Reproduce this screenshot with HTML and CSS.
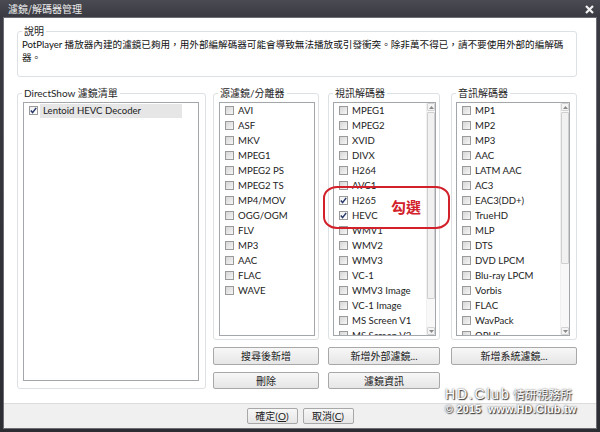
FILE: index.html
```html
<!DOCTYPE html>
<html lang="zh-Hant">
<head>
<meta charset="utf-8">
<title>濾鏡/解碼器管理</title>
<link rel="stylesheet" href="styles.css">
</head>
<body>
<div class="window">
  <div class="titlebar">
    <span class="title">濾鏡/解碼器管理</span>
    <svg class="close" width="9" height="9" viewBox="0 0 9 9"><path d="M1 1 L8 8 M8 1 L1 8" stroke="#f2f2f2" stroke-width="2.2" fill="none"/></svg>
  </div>
  <div class="client">
    <div class="main">
      <div class="group desc">
        <span class="legend">說明</span>
        <p class="desc-text">PotPlayer 播放器內建的濾鏡已夠用，用外部編解碼器可能會導致無法播放或引發衝突。除非萬不得已，請不要使用外部的編解碼<br>器。</p>
      </div>
      <div class="row">
        <div class="group ds">
          <span class="legend">DirectShow 濾鏡清單</span>
          <div class="listbox">
            <div class="items">
              <div class="item sel"><span class="cb on"><svg width="7" height="7" viewBox="0 0 7 7"><path d="M0.8 3.6 L2.6 5.6 L6.2 0.9" stroke="#25386a" stroke-width="1.5" fill="none"/></svg></span><span class="label">Lentoid HEVC Decoder</span></div>
            </div>
          </div>
        </div>

        <div class="col col-src">
          <div class="group cgroup">
            <span class="legend">源濾鏡/分離器</span>
            <div class="listbox">
              <div class="items">
                <div class="item"><span class="cb"></span><span class="label">AVI</span></div>
                <div class="item"><span class="cb"></span><span class="label">ASF</span></div>
                <div class="item"><span class="cb"></span><span class="label">MKV</span></div>
                <div class="item"><span class="cb"></span><span class="label">MPEG1</span></div>
                <div class="item"><span class="cb"></span><span class="label">MPEG2 PS</span></div>
                <div class="item"><span class="cb"></span><span class="label">MPEG2 TS</span></div>
                <div class="item"><span class="cb"></span><span class="label">MP4/MOV</span></div>
                <div class="item"><span class="cb"></span><span class="label">OGG/OGM</span></div>
                <div class="item"><span class="cb"></span><span class="label">FLV</span></div>
                <div class="item"><span class="cb"></span><span class="label">MP3</span></div>
                <div class="item"><span class="cb"></span><span class="label">AAC</span></div>
                <div class="item"><span class="cb"></span><span class="label">FLAC</span></div>
                <div class="item"><span class="cb"></span><span class="label">WAVE</span></div>
              </div>
            </div>
          </div>
          <button class="btn b1">搜尋後新增</button>
          <button class="btn b2">刪除</button>
        </div>

        <div class="col col-vid">
          <div class="group cgroup">
            <span class="legend">視訊解碼器</span>
            <div class="listbox">
              <div class="items">
                <div class="item"><span class="cb"></span><span class="label">MPEG1</span></div>
                <div class="item"><span class="cb"></span><span class="label">MPEG2</span></div>
                <div class="item"><span class="cb"></span><span class="label">XVID</span></div>
                <div class="item"><span class="cb"></span><span class="label">DIVX</span></div>
                <div class="item"><span class="cb"></span><span class="label">H264</span></div>
                <div class="item"><span class="cb"></span><span class="label">AVC1</span></div>
                <div class="item"><span class="cb on"><svg width="7" height="7" viewBox="0 0 7 7"><path d="M0.8 3.6 L2.6 5.6 L6.2 0.9" stroke="#25386a" stroke-width="1.5" fill="none"/></svg></span><span class="label">H265</span></div>
                <div class="item"><span class="cb on"><svg width="7" height="7" viewBox="0 0 7 7"><path d="M0.8 3.6 L2.6 5.6 L6.2 0.9" stroke="#25386a" stroke-width="1.5" fill="none"/></svg></span><span class="label">HEVC</span></div>
                <div class="item"><span class="cb"></span><span class="label">WMV1</span></div>
                <div class="item"><span class="cb"></span><span class="label">WMV2</span></div>
                <div class="item"><span class="cb"></span><span class="label">WMV3</span></div>
                <div class="item"><span class="cb"></span><span class="label">VC-1</span></div>
                <div class="item"><span class="cb"></span><span class="label">WMV3 Image</span></div>
                <div class="item"><span class="cb"></span><span class="label">VC-1 Image</span></div>
                <div class="item"><span class="cb"></span><span class="label">MS Screen V1</span></div>
                <div class="item"><span class="cb"></span><span class="label">MS Screen V2</span></div>
              </div>
              <div class="sb">
                <div class="sb-btn"><svg width="5" height="3" viewBox="0 0 5 3"><path d="M0 3 L2.5 0 L5 3Z" fill="#8a8a8a"/></svg></div>
                <div class="sb-track"><div class="sb-thumb thumb-vid"></div></div>
                <div class="sb-btn"><svg width="5" height="3" viewBox="0 0 5 3"><path d="M0 0 L2.5 3 L5 0Z" fill="#8a8a8a"/></svg></div>
              </div>
            </div>
          </div>
          <button class="btn b1">新增外部濾鏡...</button>
          <button class="btn b2">濾鏡資訊</button>
        </div>

        <div class="col col-aud">
          <div class="group cgroup">
            <span class="legend">音訊解碼器</span>
            <div class="listbox">
              <div class="items">
                <div class="item"><span class="cb"></span><span class="label">MP1</span></div>
                <div class="item"><span class="cb"></span><span class="label">MP2</span></div>
                <div class="item"><span class="cb"></span><span class="label">MP3</span></div>
                <div class="item"><span class="cb"></span><span class="label">AAC</span></div>
                <div class="item"><span class="cb"></span><span class="label">LATM AAC</span></div>
                <div class="item"><span class="cb"></span><span class="label">AC3</span></div>
                <div class="item"><span class="cb"></span><span class="label">EAC3(DD+)</span></div>
                <div class="item"><span class="cb"></span><span class="label">TrueHD</span></div>
                <div class="item"><span class="cb"></span><span class="label">MLP</span></div>
                <div class="item"><span class="cb"></span><span class="label">DTS</span></div>
                <div class="item"><span class="cb"></span><span class="label">DVD LPCM</span></div>
                <div class="item"><span class="cb"></span><span class="label">Blu-ray LPCM</span></div>
                <div class="item"><span class="cb"></span><span class="label">Vorbis</span></div>
                <div class="item"><span class="cb"></span><span class="label">FLAC</span></div>
                <div class="item"><span class="cb"></span><span class="label">WavPack</span></div>
                <div class="item"><span class="cb"></span><span class="label">OPUS</span></div>
              </div>
              <div class="sb">
                <div class="sb-btn"><svg width="5" height="3" viewBox="0 0 5 3"><path d="M0 3 L2.5 0 L5 3Z" fill="#8a8a8a"/></svg></div>
                <div class="sb-track"><div class="sb-thumb thumb-aud"></div></div>
                <div class="sb-btn"><svg width="5" height="3" viewBox="0 0 5 3"><path d="M0 0 L2.5 3 L5 0Z" fill="#8a8a8a"/></svg></div>
              </div>
            </div>
          </div>
          <button class="btn b1">新增系統濾鏡...</button>
        </div>
      </div>
    </div>
    <div class="footer">
      <button class="btn fbtn">確定(<u>O</u>)</button>
      <button class="btn fbtn">取消(<u>C</u>)</button>
    </div>
  </div>

  <div class="annot"></div>
  <div class="annot-text">勾選</div>
  <div class="watermark">
    <div class="wm1"><span class="wm-latin">HD.Club</span> <span class="wm-cjk">情研視務所</span></div>
    <div class="wm2">© 2015&nbsp; www.HD.Club.tw</div>
  </div>
</div>
</body>
</html>
```

FILE: styles.css
```css
* { box-sizing: border-box; }

html, body {
  margin: 0;
  padding: 0;
}

body {
  width: 600px;
  height: 432px;
  overflow: hidden;
  background: #2f3036;
  font-family: Lato, "Noto Sans CJK TC", sans-serif;
  font-size: 10px;
  color: #222;
}

.window {
  position: relative;
  width: 600px;
  height: 432px;
  display: flex;
  flex-direction: column;
  background: linear-gradient(#3b3c43, #2c2d33);
}

.titlebar {
  height: 18px;
  flex: none;
  display: flex;
  align-items: center;
  justify-content: space-between;
  padding: 0 6px 0 8px;
  background: linear-gradient(#4a4b52, #393a41);
}

.title {
  color: #ececec;
  font-size: 10px;
  line-height: 12px;
  font-family: "Noto Sans CJK TC", sans-serif;
}

.close {
  display: block;
  margin-top: 1px;
}

.client {
  flex: 1;
  margin: 0 4px 4px 4px;
  background: #ffffff;
  display: flex;
  flex-direction: column;
  box-shadow: 0 0 0 1px #6d6e75;
}

.main {
  flex: 1;
  padding: 13px 19px 0 13px;
}

.group {
  position: relative;
  border: 1px solid #dde1e4;
  border-radius: 3px;
}

.legend {
  position: absolute;
  top: -7px;
  left: 4px;
  padding: 0 2px;
  line-height: 12px;
  background: #ffffff;
  color: #262626;
  white-space: nowrap;
}

.desc {
  height: 46px;
}

.desc-text {
  margin: 0;
  padding: 6px 4px 0 4px;
  line-height: 13px;
  font-size: 9.6px;
  white-space: nowrap;
  color: #111;
}

.row {
  display: flex;
  margin-top: 16px;
}

.ds {
  width: 189px;
  height: 296px;
  padding: 8px 6px 7px 5px;
  display: flex;
}

.col {
  display: flex;
  flex-direction: column;
}

.col-src { width: 106px; margin-left: 7px; }
.col-vid { width: 112px; margin-left: 9px; }
.col-aud { width: 126px; margin-left: 11px; }

.cgroup {
  height: 247px;
  padding: 8px 3px 3px 4px;
  display: flex;
}

.col-src .cgroup { padding-left: 5px; }
.col-aud .cgroup { padding-right: 6px; }

.listbox {
  flex: 1;
  display: flex;
  border: 1px solid #a3a6ab;
  background: #ffffff;
  overflow: hidden;
}

.items {
  flex: 1;
  overflow: hidden;
}

.item {
  height: 15px;
  display: flex;
  align-items: center;
  padding-left: 5px;
  white-space: nowrap;
}

.cb {
  flex: none;
  width: 9px;
  height: 9px;
  border: 1px solid #9a9a9a;
  background: linear-gradient(135deg, #d6d6d6, #f6f6f6);
  margin-right: 4px;
  display: flex;
  align-items: center;
  justify-content: center;
}

.cb.on {
  background: linear-gradient(135deg, #f0f0f0, #ffffff);
}

.label {
  font-size: 9.6px;
  line-height: 15px;
  color: #222;
}

.sel .cb { margin-right: 2px; }

.sel .label {
  width: 142px;
  padding-left: 3px;
  background: #e6e6e6;
  line-height: 14px;
}

.sb {
  flex: none;
  width: 9px;
  display: flex;
  flex-direction: column;
  background: #f8f8f8;
  border-left: 1px solid #f0f0f0;
}

.sb-btn {
  height: 8px;
  border: 1px solid #d3d3d3;
  border-radius: 1px;
  background: #f4f4f4;
  display: flex;
  align-items: center;
  justify-content: center;
}

.sb-track {
  flex: 1;
  padding-top: 1px;
}

.sb-thumb {
  border: 1px solid #cfcfcf;
  border-radius: 1px;
  background: #f1f1f1;
}

.thumb-vid { height: 187px; }
.thumb-aud { height: 152px; }

.btn {
  font-family: inherit;
  font-size: 10px;
  color: #222;
  border: 1px solid #a8a8a8;
  border-radius: 2px;
  background: linear-gradient(#f7f7f7, #e6e6e6);
  padding: 0;
  line-height: 14px;
}

.b1 { height: 18px; margin-top: 7px; }
.b2 { height: 17px; margin-top: 7px; }

.footer {
  flex: none;
  height: 25px;
  border-top: 1px solid #dcdcdc;
  background: #f0f0f0;
  display: flex;
  justify-content: center;
  gap: 5px;
  padding-top: 4px;
}

.fbtn {
  width: 51px;
  height: 16px;
  line-height: 13px;
}

.annot {
  position: absolute;
  left: 323px;
  top: 186px;
  width: 127px;
  height: 43px;
  border: 2px solid #d3212b;
  border-radius: 14px / 12px;
}

.annot-text {
  position: absolute;
  left: 391px;
  top: 199px;
  font-family: "Noto Sans CJK TC", sans-serif;
  font-size: 15px;
  line-height: 16px;
  font-weight: bold;
  color: #d3212b;
}

.watermark {
  position: absolute;
  left: 445px;
  top: 386px;
  color: #ffffff;
  text-shadow: 0 0 2px #3a3a3a, 1px 1px 1px #3a3a3a;
  font-family: "Liberation Sans", sans-serif;
  white-space: nowrap;
}

.wm1 {
  line-height: 17px;
}

.wm-latin {
  font-size: 14px;
  letter-spacing: 1.8px;
}

.wm-cjk {
  font-family: "Noto Sans CJK TC", sans-serif;
  font-size: 11.5px;
  letter-spacing: 0.3px;
}

.wm2 {
  font-size: 10.5px;
  font-weight: bold;
  line-height: 11px;
  letter-spacing: 0.4px;
}
```
